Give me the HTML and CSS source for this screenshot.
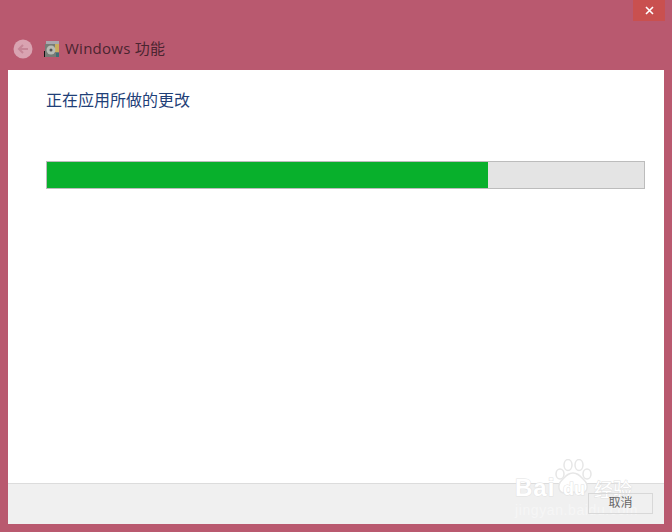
FILE: index.html
```html
<!DOCTYPE html>
<html lang="zh">
<head>
<meta charset="utf-8">
<title>Windows 功能</title>
<link rel="stylesheet" href="styles.css">
</head>
<body>
<div class="window">
  <div class="caption">
    <div class="close"><svg width="9" height="9" viewBox="0 0 9 9"><path d="M1 1l7 7M8 1l-7 7" stroke="#fff" stroke-width="1.6" fill="none"/></svg></div>
  </div>
  <div class="titlebar">
    <svg class="back" width="20" height="20" viewBox="0 0 20 20">
      <circle cx="10" cy="10" r="9.5" fill="#d9a3b1"/>
      <path d="M15 10H6M10 6l-4 4 4 4" stroke="#c58596" stroke-width="2" fill="none"/>
    </svg>
    <svg class="appicon" width="16" height="16" viewBox="0 0 16 16">
      <rect x="2" y="0" width="13" height="3" fill="#a9a7ae"/>
      <rect x="1" y="3" width="14" height="13" fill="#777b76"/>
      <rect x="11" y="3" width="4" height="8" fill="#c9ad5c"/>
      <rect x="0" y="10" width="1" height="6" fill="#111"/>
      <circle cx="7" cy="9" r="4.5" fill="#b8bbb4"/>
      <circle cx="7" cy="9" r="1.5" fill="#555"/>
      <rect x="12" y="12" width="3" height="4" fill="#3f6f76"/>
    </svg>
    <span class="title">Windows 功能</span>
  </div>
  <div class="panel">
    <main class="content">
      <h1 class="heading">正在应用所做的更改</h1>
      <div class="progress"><div class="bar" style="width:73.8%"></div></div>
    </main>
    <footer class="footer">
      <button class="cancel">取消</button>
    </footer>
  </div>
</div>
<div class="watermark">
  <svg class="paw" width="38" height="36" viewBox="0 0 38 36">
    <g fill="#fff" stroke="#e6e6e6" stroke-width="1.5">
      <ellipse cx="6" cy="15" rx="4" ry="5"/>
      <ellipse cx="14" cy="6" rx="4" ry="5.5"/>
      <ellipse cx="25" cy="6" rx="4" ry="5.5"/>
      <ellipse cx="33" cy="15" rx="4" ry="5"/>
      <path d="M19 14c-5 0-7 3-11 7-5 5-4 13 3 13 3 0 5-1 8-1s5 1 8 1c7 0 8-8 3-13-4-4-6-7-11-7z"/>
    </g>
  </svg>
  <span class="wm-brand">Bai</span><span class="wm-du">du</span><span class="wm-cn">经验</span>
  <span class="wm-url">jingyan.baidu.com</span>
</div>
</body>
</html>
```
FILE: styles.css
```css
html, body {
  margin: 0;
  padding: 0;
}
body {
  width: 672px;
  height: 532px;
  overflow: hidden;
  position: relative;
  background: #b9596f;
  font-family: "Liberation Sans", "Noto Sans CJK SC", sans-serif;
}
.window {
  height: 532px;
  display: flex;
  flex-direction: column;
  padding: 0 8px 8px;
  box-sizing: border-box;
}
.caption {
  height: 21px;
  display: flex;
  justify-content: flex-end;
  margin-right: -1px;
  flex: none;
}
.close {
  width: 32px;
  height: 21px;
  background: #c9504f;
  display: flex;
  align-items: center;
  justify-content: center;
}
.titlebar {
  height: 49px;
  flex: none;
  display: flex;
  align-items: center;
  box-sizing: border-box;
  padding: 6px 0 0 5px;
}
.back {
  margin-right: 11px;
}
.appicon {
  margin-right: 5px;
}
.title {
  font-family: "Segoe UI", "Open Sans", "Noto Sans CJK SC", sans-serif;
  font-size: 15px;
  line-height: 18px;
  letter-spacing: .25px;
  margin-top: -2px;
  color: #4a2530;
}
.panel {
  flex: 1;
  display: flex;
  flex-direction: column;
  background: #fff;
}
.content {
  flex: 1;
  padding: 19px 19px 0 38px;
}
.heading {
  margin: 0;
  font-family: "Noto Sans CJK SC", sans-serif;
  font-weight: 400;
  font-size: 16px;
  line-height: 20px;
  color: #1f3f78;
}
.progress {
  margin-top: 52px;
  height: 28px;
  box-sizing: border-box;
  border: 1px solid #bcbcbc;
  background: #e4e4e4;
}
.bar {
  height: 100%;
  background: #08b02c;
}
.footer {
  height: 41px;
  flex: none;
  box-sizing: border-box;
  border-top: 1px solid #dcdcdc;
  background: #f0f0f0;
  display: flex;
  justify-content: flex-end;
  padding: 9px 11px 0 0;
}
.cancel {
  position: relative;
  z-index: 1;
  width: 65px;
  height: 21px;
  padding: 0 0 3px 0;
  box-sizing: border-box;
  border: 1px solid #d8d8d8;
  background: transparent;
  font-family: "Noto Sans CJK SC", sans-serif;
  font-size: 12px;
  line-height: 16px;
  color: #666;
}
.watermark {
  position: absolute;
  left: 515px;
  top: 458px;
  width: 150px;
  height: 64px;
  color: #fff;
}
.paw {
  position: absolute;
  left: 39px;
  top: 1px;
}
.wm-brand, .wm-du, .wm-cn {
  position: absolute;
  font-weight: 700;
  line-height: 26px;
  -webkit-text-stroke: 1px #e2e2e2;
  paint-order: stroke fill;
}
.wm-brand {
  left: 0;
  top: 17px;
  font-size: 24px;
  letter-spacing: 1px;
}
.wm-du {
  left: 48px;
  top: 18px;
  font-size: 18px;
}
.wm-cn {
  left: 79px;
  top: 18px;
  font-family: "Noto Sans CJK SC", sans-serif;
  font-weight: 400;
  font-size: 19px;
}
.wm-url {
  position: absolute;
  left: 0;
  top: 44px;
  font-size: 14px;
  line-height: 16px;
  letter-spacing: .6px;
  white-space: nowrap;
  color: #f6f6f6;
}
```
